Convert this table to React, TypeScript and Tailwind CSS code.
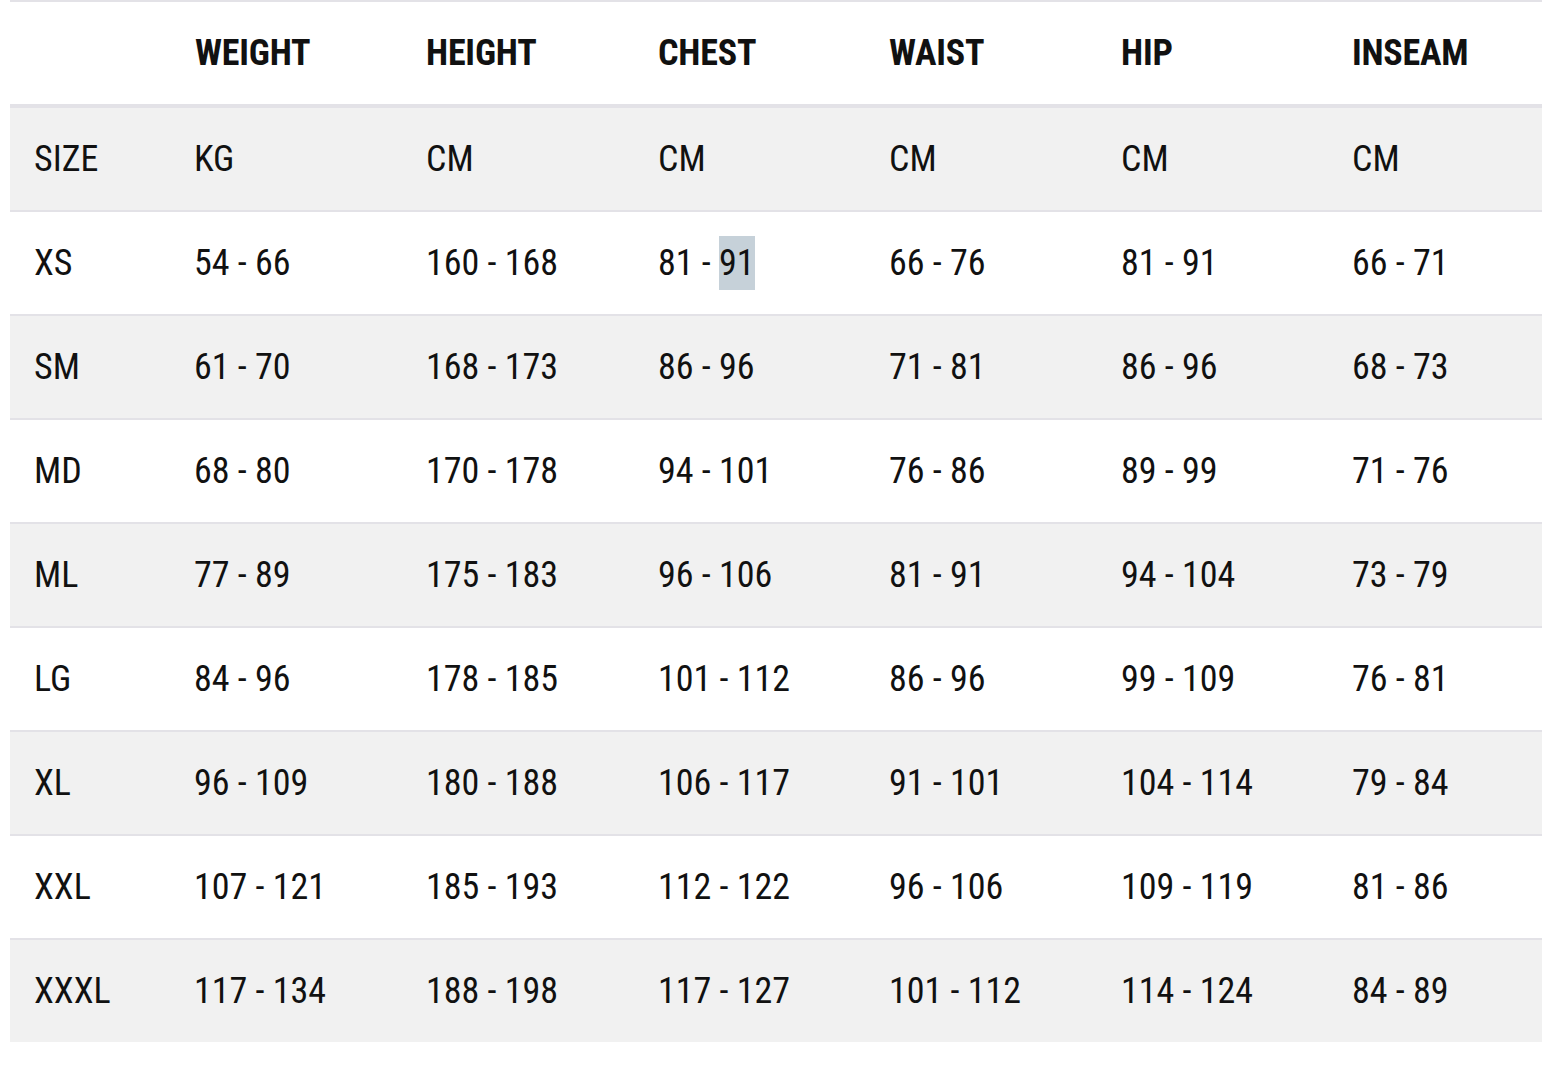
const COLUMNS = ['WEIGHT', 'HEIGHT', 'CHEST', 'WAIST', 'HIP', 'INSEAM'];

// column widths in px: size column, then the six measurements
const WIDTHS = ['w-[160px]', 'w-[232px]', 'w-[232px]', 'w-[231px]', 'w-[232px]', 'w-[231px]', 'flex-1'];

const ROWS: string[][] = [
  ['SIZE', 'KG', 'CM', 'CM', 'CM', 'CM', 'CM'],
  ['XS', '54 - 66', '160 - 168', '81 - 91', '66 - 76', '81 - 91', '66 - 71'],
  ['SM', '61 - 70', '168 - 173', '86 - 96', '71 - 81', '86 - 96', '68 - 73'],
  ['MD', '68 - 80', '170 - 178', '94 - 101', '76 - 86', '89 - 99', '71 - 76'],
  ['ML', '77 - 89', '175 - 183', '96 - 106', '81 - 91', '94 - 104', '73 - 79'],
  ['LG', '84 - 96', '178 - 185', '101 - 112', '86 - 96', '99 - 109', '76 - 81'],
  ['XL', '96 - 109', '180 - 188', '106 - 117', '91 - 101', '104 - 114', '79 - 84'],
  ['XXL', '107 - 121', '185 - 193', '112 - 122', '96 - 106', '109 - 119', '81 - 86'],
  ['XXXL', '117 - 134', '188 - 198', '117 - 127', '101 - 112', '114 - 124', '84 - 89'],
];

function Cell({ value, highlight }: { value: string; highlight?: boolean }) {
  if (!highlight) return <>{value}</>;
  const [a, b] = value.split(' - ');
  return (
    <span className="whitespace-pre">
      {a} - <span className="bg-[#c6d1d9] py-[6px]">{b}</span>
    </span>
  );
}

export default function App() {
  return (
    <div className="min-h-screen bg-white px-[10px] font-['Roboto',sans-serif] font-stretch-condensed text-[#111] text-[36px] leading-none">
      <div className="w-[1532px]">
        {/* header */}
        <div className="flex h-[108px] border-t-2 border-b-4 border-[#e3e2e7]">
          <div className={WIDTHS[0]} />
          {COLUMNS.map((c, j) => (
            <div
              key={c}
              className={`${WIDTHS[j + 1]} flex items-center ${j === 0 ? 'pl-[25px]' : 'pl-[24px]'} font-bold tracking-[-0.2px]`}
            >
              {c}
            </div>
          ))}
        </div>

        {/* rows */}
        {ROWS.map((row, i) => (
          <div
            key={row[0]}
            className={`flex ${i < ROWS.length - 1 ? 'h-[104px] border-b-2 border-[#e3e2e7]' : 'h-[102px]'} ${
              i % 2 === 0 ? 'bg-[#f1f1f1]' : 'bg-white'
            }`}
          >
            {row.map((v, j) => (
              <div key={j} className={`${WIDTHS[j]} flex items-center pl-[24px]`}>
                <Cell value={v} highlight={i === 1 && j === 3} />
              </div>
            ))}
          </div>
        ))}
      </div>
    </div>
  );
}
